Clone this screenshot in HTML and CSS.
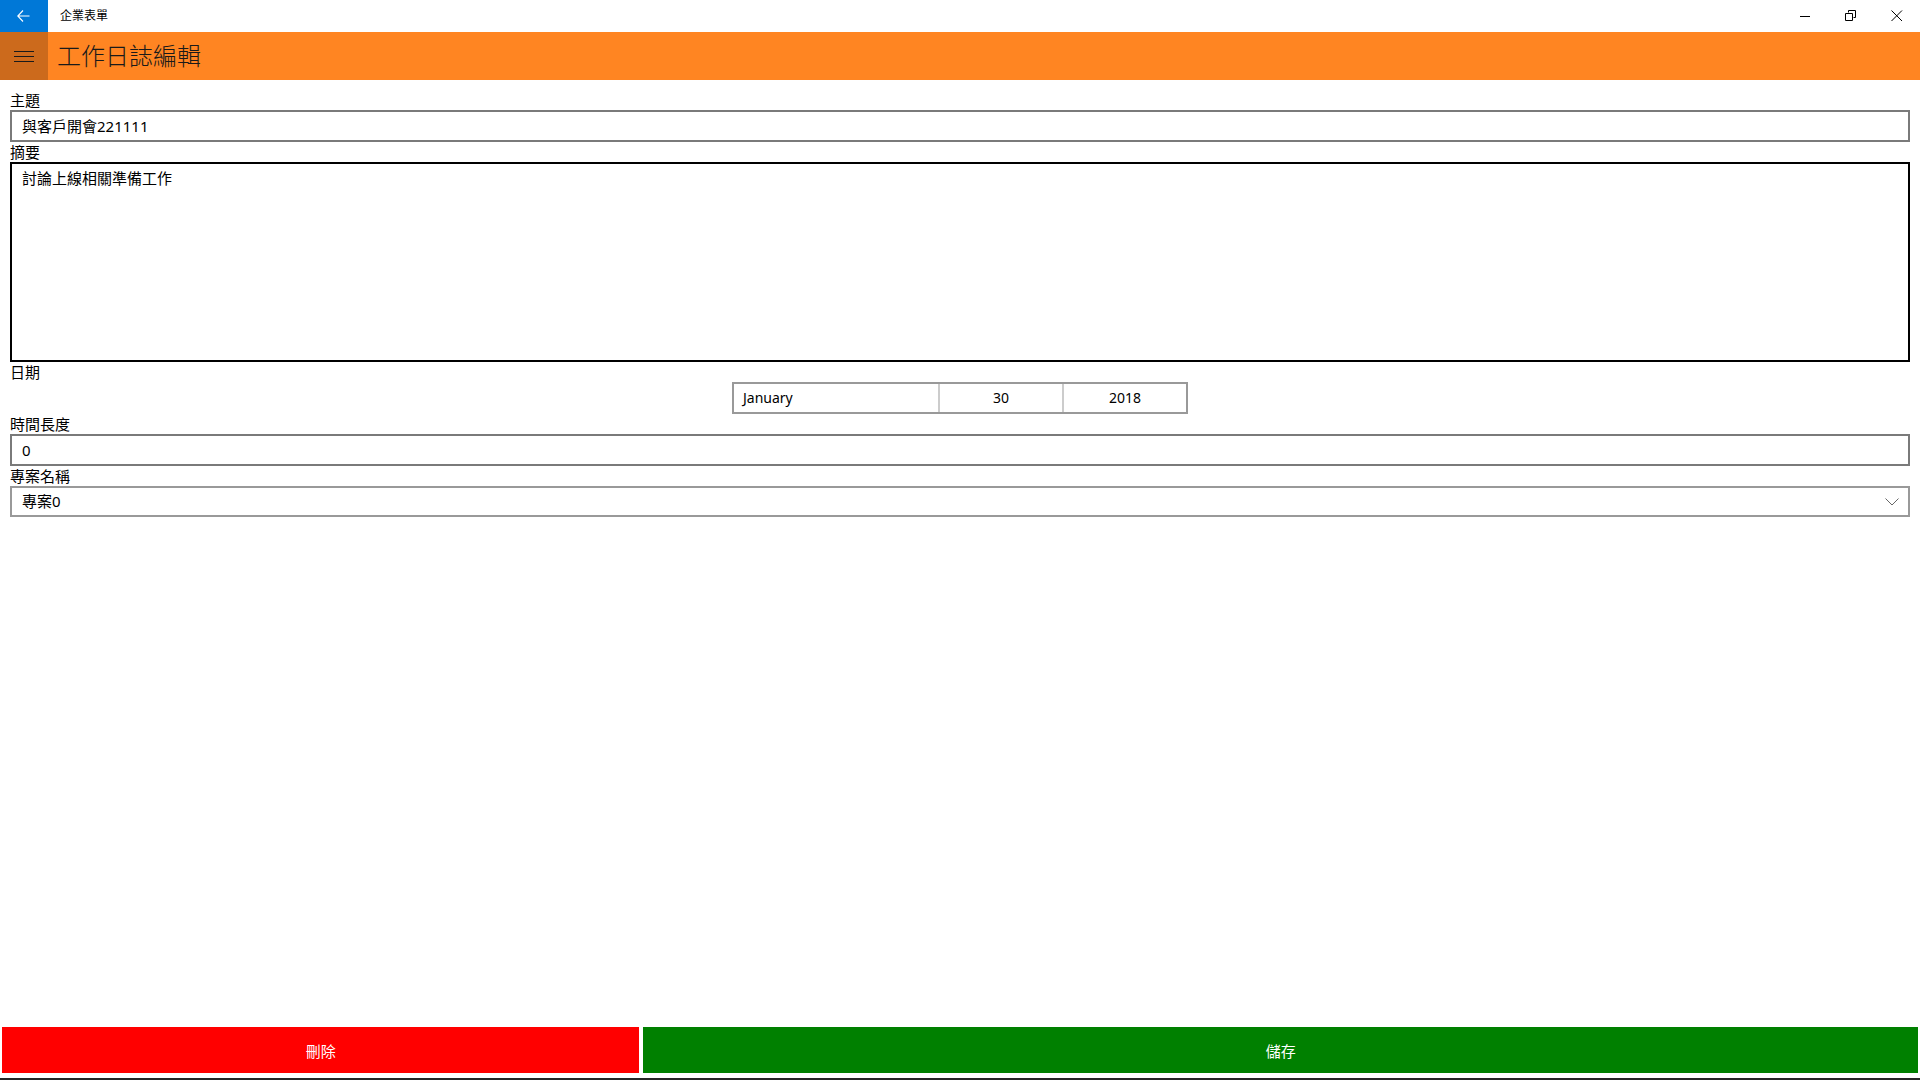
FILE: index.html
```html
<!DOCTYPE html>
<html lang="zh-Hant">
<head>
<meta charset="utf-8">
<title>企業表單</title>
<link rel="stylesheet" href="styles.css">
</head>
<body>
<div class="app">
  <div class="titlebar">
    <div class="back">
      <svg width="14" height="12" viewBox="0 0 14 12"><path d="M6 0.5 L0.8 6 L6 11.5 M0.8 6 H12.5" fill="none" stroke="#fff" stroke-width="1.1"/></svg>
    </div>
    <div class="apptitle">企業表單</div>
    <div class="winctrls">
      <div class="wc"><svg width="12" height="12" viewBox="0 0 12 12"><path d="M1 6.5 H11" stroke="#000" stroke-width="1"/></svg></div>
      <div class="wc"><svg width="12" height="12" viewBox="0 0 12 12"><path d="M3.5 2.5 V0.5 H10.5 V7.5 H8.5 M0.5 3.5 H7.5 V10.5 H0.5 Z" fill="none" stroke="#000" stroke-width="1"/></svg></div>
      <div class="wc"><svg width="12" height="12" viewBox="0 0 12 12"><path d="M0.5 0.5 L11 11 M11 0.5 L0.5 11" stroke="#000" stroke-width="1"/></svg></div>
    </div>
  </div>
  <div class="header">
    <div class="hamburger">
      <span></span><span></span><span></span>
    </div>
    <div class="pagetitle">工作日誌編輯</div>
  </div>
  <div class="form">
    <div class="label first">主題</div>
    <div class="field">與客戶開會221111</div>
    <div class="label">摘要</div>
    <div class="field area">討論上線相關準備工作</div>
    <div class="label">日期</div>
    <div class="daterow">
      <div class="datepicker">
        <div class="dp month">January</div>
        <div class="dp day">30</div>
        <div class="dp year">2018</div>
      </div>
    </div>
    <div class="label">時間長度</div>
    <div class="field">0</div>
    <div class="label">專案名稱</div>
    <div class="field select">
      <span>專案0</span>
      <svg class="chev" width="14" height="8" viewBox="0 0 14 8"><path d="M0.5 0.5 L7 7 L13.5 0.5" fill="none" stroke="#666" stroke-width="1"/></svg>
    </div>
  </div>
  <div class="footer">
    <div class="btn del">刪除</div>
    <div class="btn save">儲存</div>
  </div>
  <div class="taskedge"></div>
</div>
</body>
</html>
```
FILE: styles.css
```css
* { box-sizing: border-box; }
html, body { margin: 0; padding: 0; }
body {
  width: 1920px;
  height: 1080px;
  background: #fff;
  font-family: "Noto Sans", "Noto Sans CJK TC", sans-serif;
  color: #000;
  overflow: hidden;
}
.app {
  display: flex;
  flex-direction: column;
  height: 1080px;
}
.titlebar {
  height: 32px;
  display: flex;
  align-items: center;
  background: #fff;
}
.back {
  width: 48px;
  height: 32px;
  background: #0078d7;
  display: flex;
  align-items: center;
  justify-content: center;
}
.apptitle {
  margin-left: 12px;
  font-size: 12px;
  line-height: 32px;
  flex: 1;
}
.winctrls {
  display: flex;
  height: 32px;
}
.wc {
  width: 46px;
  height: 32px;
  display: flex;
  align-items: center;
  justify-content: center;
}
.header {
  height: 48px;
  background: #ff8522;
  display: flex;
  align-items: center;
}
.hamburger {
  width: 48px;
  height: 48px;
  background: #cc6a1c;
  display: flex;
  flex-direction: column;
  justify-content: center;
  align-items: center;
  gap: 4px;
}
.hamburger span {
  display: block;
  width: 20px;
  height: 1px;
  background: #1a1a1a;
}
.pagetitle {
  margin-left: 9px;
  font-size: 24px;
  font-weight: 300;
  line-height: 48px;
  color: #1a1a1a;
}
.form {
  flex: 1;
  padding: 10px 10px 0 10px;
  display: flex;
  flex-direction: column;
}
.label {
  height: 20px;
  line-height: 21px;
  font-size: 15px;
  color: #000;
}
.field {
  height: 32px;
  border: 2px solid #7a7a7a;
  padding: 0 10px;
  font-size: 15px;
  line-height: 29px;
  color: #000;
}
.field.area {
  height: 200px;
  border-color: #000;
  padding-top: 4px;
  line-height: 20px;
}
.field.select {
  height: 31px;
  line-height: 27px;
  border-color: #999;
  display: flex;
  justify-content: space-between;
  align-items: center;
  padding-right: 9px;
}
.chev { display: block; }
.daterow {
  display: flex;
  justify-content: center;
}
.datepicker {
  width: 456px;
  height: 32px;
  border: 2px solid #999;
  display: flex;
  font-size: 14px;
  line-height: 28px;
}
.dp.month {
  width: 206px;
  padding-left: 9px;
  border-right: 2px solid #ccc;
}
.dp.day {
  width: 124px;
  text-align: center;
  border-right: 2px solid #ccc;
}
.dp.year {
  flex: 1;
  text-align: center;
}
.footer {
  display: grid;
  grid-template-columns: 1fr 2fr;
  gap: 4px;
  padding: 0 2px;
  height: 46px;
  margin-bottom: 5px;
}
.btn {
  color: #fff;
  font-size: 15px;
  display: flex;
  align-items: center;
  justify-content: center;
}
.btn.del { background: #ff0000; }
.btn.save { background: #008000; }
.taskedge {
  height: 2px;
  background: #262626;
}
```
